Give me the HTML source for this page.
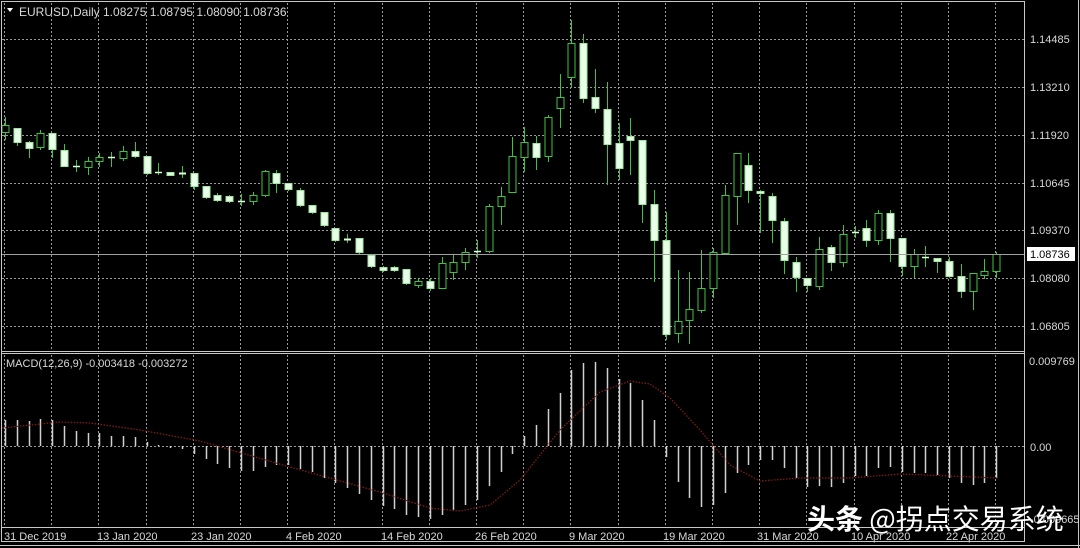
<!DOCTYPE html>
<html><head><meta charset="utf-8"><style>
html,body{margin:0;padding:0;background:#000;width:1080px;height:548px;overflow:hidden}
svg{display:block}
text{font-family:"Liberation Sans","DejaVu Sans",sans-serif;font-size:11px;fill:#d8d8d8}
</style></head><body>
<svg id="s" width="1080" height="548" viewBox="0 0 1080 548">
<rect width="1080" height="548" fill="#000"/>
<g id="grid" stroke="#9a9a9a" stroke-width="1" stroke-dasharray="2,2" fill="none"></g>
<g id="macd"></g>
<g id="cand"></g>
<g stroke="#c8c8c8" fill="none" stroke-width="1">
<rect x="1.5" y="1.5" width="1023" height="540"/>
<line x1="1.5" y1="351.5" x2="1024.5" y2="351.5"/>
<line x1="1.5" y1="353.5" x2="1024.5" y2="353.5"/>
<line x1="1.5" y1="527.5" x2="1024.5" y2="527.5"/>
<line x1="1078.5" y1="0" x2="1078.5" y2="548"/>
<line x1="0" y1="545.5" x2="1080" y2="545.5"/>
</g>
<line x1="2" y1="254.5" x2="1024" y2="254.5" stroke="#a0a0a0" stroke-width="1"/>
<polygon points="7,8 13,8 10,12" fill="#fff"/>
<text x="19" y="16" style="font-size:12px">EURUSD,Daily  1.08275 1.08795 1.08090 1.08736</text>
<text x="6" y="367">MACD(12,26,9) -0.003418 -0.003272</text>
<text x="1030" y="43">1.14485</text>
<text x="1030" y="91">1.13210</text>
<text x="1030" y="139">1.11920</text>
<text x="1030" y="187">1.10645</text>
<text x="1030" y="234">1.09370</text>
<text x="1030" y="282">1.08080</text>
<text x="1030" y="330">1.06805</text>
<rect x="1027" y="247" width="48" height="14" fill="#fff"/>
<text x="1030" y="258" style="fill:#000">1.08736</text>
<text x="1029" y="365">0.009769</text>
<text x="1030" y="451">0.00</text>
<text x="1030" y="523">-0.009665</text>
<text x="4" y="540">31 Dec 2019</text>
<text x="97" y="540">13 Jan 2020</text>
<text x="191" y="540">23 Jan 2020</text>
<text x="286" y="540">4 Feb 2020</text>
<text x="381" y="540">14 Feb 2020</text>
<text x="475" y="540">26 Feb 2020</text>
<text x="569" y="540">9 Mar 2020</text>
<text x="663" y="540">19 Mar 2020</text>
<text x="757" y="540">31 Mar 2020</text>
<text x="851" y="540">10 Apr 2020</text>
<text x="946" y="540">22 Apr 2020</text>
<text x="807" y="529" style="font-family:'Noto Sans CJK SC','WenQuanYi Zen Hei',sans-serif;font-size:28px;fill:#fff"><tspan font-weight="bold">头条</tspan> @拐点交易系统</text>
</svg>
<script>
var NS="http://www.w3.org/2000/svg";
function el(p,t,a){var e=document.createElementNS(NS,t);for(var k in a)e.setAttribute(k,a[k]);p.appendChild(e);return e;}
var g=document.getElementById('grid');
for(var x=4;x<1024;x+=47.2){var xx=Math.round(x)+0.5;el(g,'line',{x1:xx,y1:3,x2:xx,y2:351});el(g,'line',{x1:xx,y1:355,x2:xx,y2:527});}
[39,87,135,183,230,278,326].forEach(function(y){el(g,'line',{x1:2,y1:y+0.5,x2:1024,y2:y+0.5});});
el(g,'line',{x1:2,y1:446.5,x2:1024,y2:446.5});
var C=[
['h',125,132,117,140],['w',128,142,128,146],['w',142,148,141,158],['h',133,147,130,150],['w',133,149,133,158],
['w',150,166,144,167],['c',166,166,160,172],['h',161,167,157,175],['h',157,161,153,167],['c',157,158,152,167],
['h',151,158,146,161],['w',151,156,142,158],['w',156,173,156,175],['c',172,172,163,175],['w',172,175,172,175],
['c',173,175,166,178],['w',173,186,173,190],['w',186,197,186,199],['w',195,200,193,202],['w',196,201,195,203],
['c',201,201,194,206],['h',195,201,192,205],['h',171,195,170,197],['w',173,183,170,193],['w',183,189,183,191],
['w',190,205,188,207],['w',205,212,205,214],['w',212,225,212,227],['w',228,240,228,242],['c',239,241,234,243],
['w',238,252,238,254],['w',255,266,255,268],['w',267,270,266,272],['w',267,270,266,272],['w',269,283,269,285],
['h',281,285,278,288],['w',281,288,278,291],['h',263,288,257,289],['h',262,272,255,280],['h',252,262,248,270],
['c',251,251,240,258],['h',206,251,204,253],['h',196,206,187,225],['h',156,192,137,193],['h',142,157,127,172],
['w',143,157,136,170],['h',117,156,115,162],['h',97,108,74,128],['h',43,77,20,88],['w',43,98,34,103],
['w',97,108,69,113],['w',109,144,82,185],['w',143,168,123,180],['w',136,140,118,175],['w',140,204,140,223],
['w',204,240,190,282],['w',240,334,212,340],['h',321,333,270,343],['h',309,320,272,344],['h',288,310,250,313],
['h',252,288,248,298],['h',195,253,185,253],['h',153,196,153,225],['w',165,190,153,203],['w',191,193,190,233],
['w',196,220,193,243],['w',221,260,218,274],['w',262,277,257,292],['w',278,285,278,292],['h',249,286,237,290],
['w',247,262,245,271],['h',234,262,225,267],['c',232,233,226,238],['w',228,240,220,247],['h',213,240,210,245],
['w',213,238,210,262],['w',238,266,238,276],['h',254,266,249,278],['c',257,257,246,267],['w',258,261,258,273],
['w',261,276,257,278],['w',276,291,264,298],['h',273,291,273,310],['h',271,275,259,279],['h',254,271,252,278]
];
var H=[420,420,421,419,420,426,431,433,433,436,436,437,442,445,448,449,454,459,464,468,471,471,467,465,465,469,472,478,483,488,494,500,506,509,515,517,519,515,510,505,500,486,472,454,436,425,409,393,370,363,362,368,379,383,400,420,457,482,498,507,505,493,473,465,460,460,468,478,487,486,487,483,476,476,468,467,472,473,473,475,478,483,485,483,478];
var cg=document.getElementById('cand'),mg=document.getElementById('macd');
for(var i=0;i<C.length;i++){
 var c=C[i],cx=Math.round(5+i*11.8)+0.5;
 el(cg,'line',{x1:cx,y1:c[3],x2:cx,y2:c[4],stroke:'#3fc23f','stroke-width':1});
 var h=Math.max(c[2]-c[1],1);
 if(c[0]=='c'){el(cg,'line',{x1:cx-3.5,y1:c[1]+0.5,x2:cx+3.5,y2:c[1]+0.5,stroke:'#d8ffd8','stroke-width':h>1?2:1.5});}
 else el(cg,'rect',{x:cx-3.5,y:c[1]+0.5,width:7,height:h,fill:c[0]=='w'?'#eaffea':'#000',stroke:c[0]=='w'?'#9be89b':'#3fc23f','stroke-width':1});
 var y=H[i];el(mg,'line',{x1:cx,y1:446,x2:cx,y2:y,stroke:'#d0d0d0','stroke-width':1.5});
}
var sig=[[2,428],[60,422],[90,423],[140,430],[200,441],[290,467],[380,492],[430,508],[460,511],[490,505],[520,480],[560,430],[600,392],[630,381],[650,384],[670,398],[700,430],[730,465],[760,481],[800,478],[850,478],[900,474],[950,476],[997,478]];
var d='M'+sig.map(function(p){return p[0]+','+p[1]}).join(' L');
el(mg,'path',{d:d,fill:'none',stroke:'#8a1c1c','stroke-width':1.2,'stroke-dasharray':'1.5,1.5'});
</script>
</body></html>
